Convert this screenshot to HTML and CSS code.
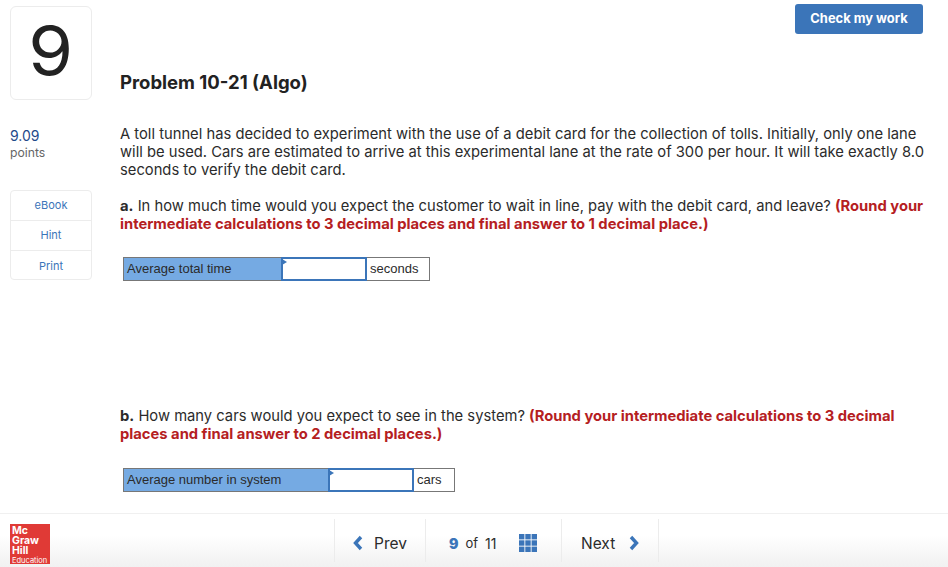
FILE: index.html
```html
<!DOCTYPE html>
<html lang="en">
<head>
<meta charset="utf-8">
<title>Problem 10-21 (Algo)</title>
<link rel="stylesheet" href="styles.css">
</head>
<body>
<div class="page">
  <div class="content">
    <aside class="side">
      <div class="qnum"><span class="digit">9</span></div>
      <div class="score">9.09</div>
      <div class="points">points</div>
      <div class="tools">
        <div class="tool">eBook</div>
        <div class="tool">Hint</div>
        <div class="tool">Print</div>
      </div>
    </aside>
    <main class="main">
      <div class="topbar"><button class="check">Check my work</button></div>
      <h1 class="title">Problem 10-21 (Algo)</h1>
      <p class="para intro">A toll tunnel has decided to experiment with the use of a debit card for the collection of tolls. Initially, only one lane will be used. Cars are estimated to arrive at this experimental lane at the rate of 300 per hour. It will take exactly 8.0 seconds to verify the debit card.</p>
      <p class="para parta"><b>a.</b> In how much time would you expect the customer to wait in line, pay with the debit card, and leave? <b class="red">(Round your intermediate calculations to 3 decimal places and final answer to 1 decimal place.)</b></p>
      <div class="answer answer-a">
        <div class="label label-a">Average total time</div>
        <div class="input"><i class="flag"></i></div>
        <div class="unit unit-a">seconds</div>
      </div>
      <p class="para partb"><b>b.</b> How many cars would you expect to see in the system? <b class="red">(Round your intermediate calculations to 3 decimal places and final answer to 2 decimal places.)</b></p>
      <div class="answer answer-b">
        <div class="label label-b">Average number in system</div>
        <div class="input"><i class="flag"></i></div>
        <div class="unit unit-b">cars</div>
      </div>
    </main>
  </div>
  <footer class="footer">
    <div class="logo"><span>Mc</span><span>Graw</span><span>Hill</span><span class="edu">Education</span></div>
    <nav class="nav">
      <div class="cell prev">
        <svg class="chev" width="10" height="16" viewBox="0 0 10 16"><path d="M8 2 2.5 8 8 14" fill="none" stroke="#3b75b9" stroke-width="3.4"/></svg>
        <span>Prev</span>
      </div>
      <div class="cell pager">
        <b class="cur">9</b><span class="of">of</span><span class="tot">11</span>
        <svg class="grid" width="18" height="18" viewBox="0 0 18 18" fill="#3b75b9"><rect x="0" y="0" width="5.4" height="5.4"/><rect x="6.3" y="0" width="5.4" height="5.4"/><rect x="12.6" y="0" width="5.4" height="5.4"/><rect x="0" y="6.3" width="5.4" height="5.4"/><rect x="6.3" y="6.3" width="5.4" height="5.4"/><rect x="12.6" y="6.3" width="5.4" height="5.4"/><rect x="0" y="12.6" width="5.4" height="5.4"/><rect x="6.3" y="12.6" width="5.4" height="5.4"/><rect x="12.6" y="12.6" width="5.4" height="5.4"/></svg>
      </div>
      <div class="cell next">
        <span>Next</span>
        <svg class="chev" width="10" height="16" viewBox="0 0 10 16"><path d="M2 2 7.5 8 2 14" fill="none" stroke="#3b75b9" stroke-width="3.4"/></svg>
      </div>
    </nav>
  </footer>
</div>
</body>
</html>
```
FILE: styles.css
```css
* { box-sizing: border-box; }
html, body { margin: 0; padding: 0; background: #fff; }
body { font-family: "Inter", "Liberation Sans", sans-serif; color: #2b2b2b; }
.page { width: 948px; height: 567px; display: flex; flex-direction: column; overflow: hidden; }
.content { flex: 1; display: flex; min-height: 0; }

.side { width: 120px; padding: 6px 0 0 10px; flex: none; }
.qnum { width: 82px; height: 94px; border: 1px solid #ececec; border-radius: 6px; font-size: 67px; line-height: 88px; text-align: center; color: #222; }
.digit { display: inline-block; transform: scaleX(1.08); }
.score { margin-top: 27px; font-size: 14px; line-height: 17px; color: #1f4a8a; }
.points { font-size: 12.2px; line-height: 17px; color: #666; }
.tools { margin-top: 29px; width: 82px; height: 90px; border: 1px solid #ececec; border-radius: 4px; }
.tool { height: 30px; font-size: 11px; line-height: 28px; text-align: center; color: #3b75b9; border-top: 1px solid #ececec; }
.tool:first-child { height: 29px; border-top: 0; }
.tool:last-child { height: 29px; line-height: 30px; }

.main { flex: 1; padding-top: 4px; padding-right: 20px; min-width: 0; }
.topbar { display: flex; justify-content: flex-end; padding-right: 5px; height: 30px; }
.check { width: 128px; height: 30px; border: 0; border-radius: 3px; background: #3b75b9; color: #fff; font: 700 12.9px/26px "Inter", sans-serif; padding: 0; }
.title { margin: 35px 0 0; font-size: 18.5px; line-height: 26px; font-weight: 700; color: #222; }
.para { margin: 0; font-size: 14.76px; line-height: 18px; color: #2b2b2b; }
.intro { margin-top: 30px; }
.parta { margin-top: 18px; }
.partb { margin-top: 126px; }
.red { color: #b5201f; }

.answer { display: flex; margin-left: 3px; height: 24px; font: 13px/22px "Liberation Sans", Arial, sans-serif; color: #2b2b2b; }
.answer-a { margin-top: 24px; }
.answer-b { margin-top: 25px; }
.label { background: #75aae3; border: 1px solid #777; border-right: 0; padding-left: 3px; }
.label-a { width: 158px; }
.label-b { width: 205px; }
.input { position: relative; width: 86px; background: #fff; border: 2px solid #3b75b9; }
.flag { position: absolute; left: -1px; top: 0; width: 0; height: 0; border-left: 5px solid #3b75b9; border-top: 3px solid transparent; border-bottom: 3px solid transparent; }
.unit { border: 1px solid #777; border-left: 0; background: #fff; padding-left: 3px; }
.unit-a { width: 63px; }
.unit-b { width: 41px; }

.footer { flex: none; height: 54px; display: flex; border-top: 1px solid #f0f0f0; background: linear-gradient(#fff 40%, #f1f1f1); padding-left: 10px; }
.logo { width: 40px; height: 40px; margin-top: 10px; background: #e03a36; color: #fff; font-weight: 700; font-size: 10.5px; line-height: 10px; padding: 2px 0 0 2px; display: flex; flex-direction: column; overflow: hidden; }
.edu { font-size: 7.5px; font-weight: 400; white-space: nowrap; line-height: 9px; }
.nav { display: flex; margin-left: 284px; height: 43px; margin-top: 5px; font-size: 15.5px; color: #2b2b2b; border-left: 1px solid #ececec; }
.cell { display: flex; align-items: center; padding-top: 5px; border-right: 1px solid #ececec; }
.prev { width: 91px; padding-left: 18px; gap: 11px; }
.pager { width: 136px; padding-left: 23px; font-size: 13px; }
.cur { color: #3b75b9; font-size: 14px; font-weight: 900; }
.of { margin-left: 7px; }
.tot { margin-left: 7px; font-size: 14px; }
.grid { margin-left: 23px; }
.next { width: 97px; padding-left: 19px; gap: 14px; }
```
